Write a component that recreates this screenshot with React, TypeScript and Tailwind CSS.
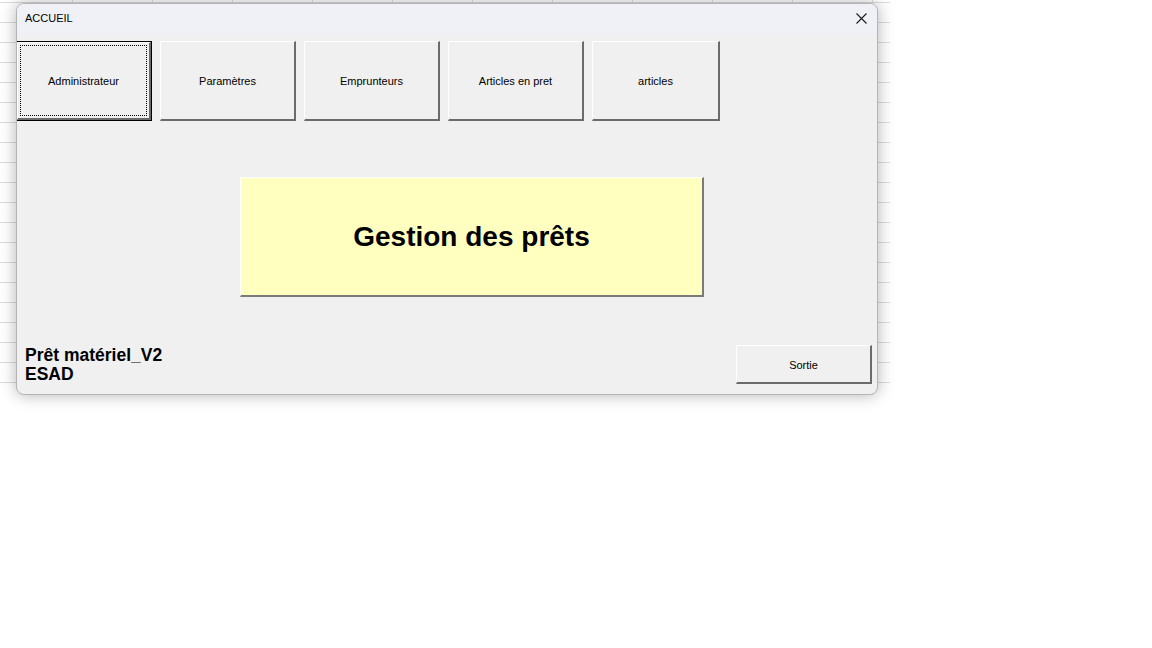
const tabs = ["Administrateur", "Paramètres", "Emprunteurs", "Articles en pret", "articles"];

function RaisedButton({
  label,
  focused,
  className,
}: {
  label: string;
  focused?: boolean;
  className?: string;
}) {
  if (focused) {
    return (
      <button
        className={`box-border flex border border-black bg-[#f0f0f0] p-0 ${className}`}
      >
        <span className="box-border flex flex-1 border-t border-l border-t-white border-l-white border-r-2 border-b-2 border-r-[#6b6b6b] border-b-[#6b6b6b] p-[2px]">
          <span className="flex flex-1 items-center justify-center border border-dotted border-black pt-[2px] text-[11px] text-black">
            {label}
          </span>
        </span>
      </button>
    );
  }
  return (
    <button
      className={`box-border flex items-center justify-center border-t border-l border-t-white border-l-white border-r-2 border-b-2 border-r-[#6b6b6b] border-b-[#6b6b6b] bg-[#f0f0f0] pt-[2px] text-[11px] text-black ${className}`}
    >
      {label}
    </button>
  );
}

export default function App() {
  return (
    <div
      className="min-h-[648px] w-[1152px] bg-white"
      style={{ fontFamily: '"Liberation Sans", Arial, sans-serif' }}
    >
      <div className="h-[395px] w-[890px] bg-white bg-[linear-gradient(to_right,#dcdcdc_1px,transparent_1px),linear-gradient(to_bottom,#dcdcdc_1px,transparent_1px)] [background-position:72px_2px] [background-size:80px_20px] pt-[3px] pl-[16px]">
        <div className="box-border flex h-[392px] w-[862px] flex-col overflow-hidden rounded-[8px] border border-[#b4b4b4] bg-[#f0f0f0] shadow-[0_0_16px_rgba(0,0,0,0.3)]">
          {/* title bar */}
          <div className="flex h-[30px] shrink-0 items-center justify-between bg-[#eff1f7] pl-[8px] pr-[10px]">
            <span className="mt-[-2px] text-[11px] text-black">ACCUEIL</span>
            <svg width="11" height="11" viewBox="0 0 11 11" className="mt-[-2px]">
              <path d="M0.5 0.5L10.5 10.5M10.5 0.5L0.5 10.5" stroke="#1a1a1a" strokeWidth="1.1" />
            </svg>
          </div>

          {/* top buttons */}
          <div className="ml-[-1px] mt-[7px] flex gap-[8px]">
            {tabs.map((t, i) => (
              <RaisedButton
                key={t}
                label={t}
                focused={i === 0}
                className={`h-[80px] ${i === 4 ? "w-[128px]" : "w-[136px]"}`}
              />
            ))}
          </div>

          {/* title box */}
          <div className="ml-[223px] mt-[56px] box-border flex h-[120px] w-[464px] items-center justify-center border-t border-l border-t-white border-l-white border-r-2 border-b-2 border-r-[#7a7a7a] border-b-[#7a7a7a] bg-[#ffffc0]">
            <span className="text-[28px] font-bold text-black">Gestion des prêts</span>
          </div>

          {/* footer */}
          <div className="mt-[48px] flex items-start justify-between pl-[8px] pr-[5px]">
            <div className="pt-[1px] text-[17.5px] font-bold leading-[19px] text-black">
              <div>Prêt matériel_V2</div>
              <div>ESAD</div>
            </div>
            <RaisedButton label="Sortie" className="h-[39px] w-[136px]" />
          </div>
        </div>
      </div>
    </div>
  );
}
